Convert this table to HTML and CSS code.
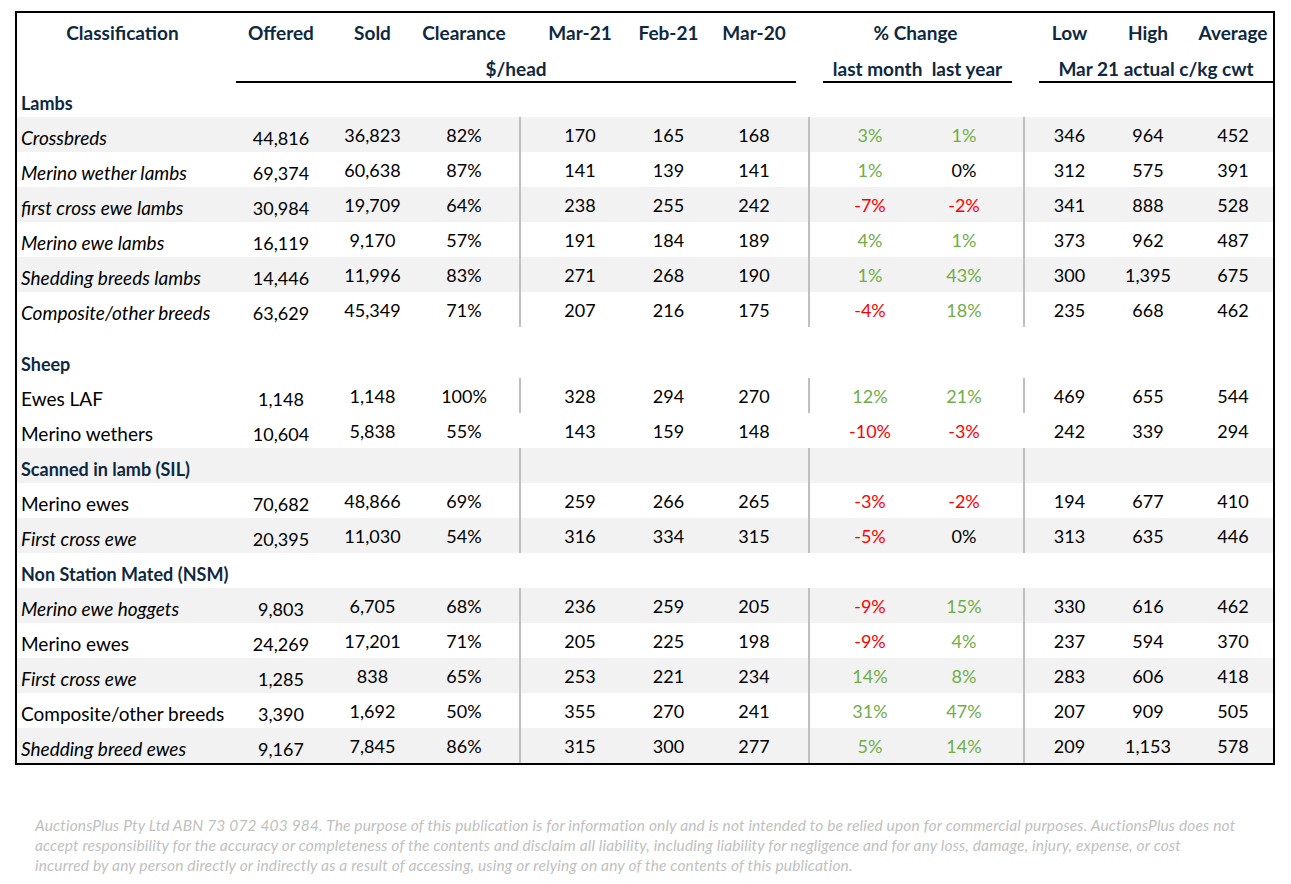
FILE: index.html
```html
<!DOCTYPE html>
<html>
<head>
<meta charset="utf-8">
<title>Sheep and lamb sales summary</title>
<link rel="stylesheet" href="styles.css">
</head>
<body>
<div class="page">
<table class="sheet">
<colgroup>
<col class="w1"><col class="w2"><col class="w3"><col class="w4"><col class="w5"><col class="w6">
<col class="w7"><col class="w8"><col class="w9"><col class="w10"><col class="w11"><col class="w12">
</colgroup>
<thead>
<tr class="hA">
<th class="h-class">Classification</th><th>Offered</th><th>Sold</th><th>Clearance</th><th>Mar-21</th><th>Feb-21</th><th>Mar-20</th><th colspan="2" class="h-chg">% Change</th><th>Low</th><th>High</th><th>Average</th>
</tr>
<tr class="hB">
<th></th>
<th colspan="6"><div class="ul ul-head">$/head</div></th>
<th colspan="2"><div class="ul ul-chg">last month&nbsp; last year</div></th>
<th colspan="3"><div class="ul ul-kg">Mar 21 actual c/kg cwt</div></th>
</tr>
</thead>
<tbody>
<tr class="sec first"><td colspan="12">Lambs</td></tr>
<tr class="band sep"><td class="it">Crossbreds</td><td>44,816</td><td>36,823</td><td>82%</td><td>170</td><td>165</td><td>168</td><td class="up">3%</td><td class="up">1%</td><td>346</td><td>964</td><td>452</td></tr>
<tr class="sep"><td class="it">Merino wether lambs</td><td>69,374</td><td>60,638</td><td>87%</td><td>141</td><td>139</td><td>141</td><td class="up">1%</td><td>0%</td><td>312</td><td>575</td><td>391</td></tr>
<tr class="band sep"><td class="it">first cross ewe lambs</td><td>30,984</td><td>19,709</td><td>64%</td><td>238</td><td>255</td><td>242</td><td class="dn">-7%</td><td class="dn">-2%</td><td>341</td><td>888</td><td>528</td></tr>
<tr class="sep"><td class="it">Merino ewe lambs</td><td>16,119</td><td>9,170</td><td>57%</td><td>191</td><td>184</td><td>189</td><td class="up">4%</td><td class="up">1%</td><td>373</td><td>962</td><td>487</td></tr>
<tr class="band sep"><td class="it">Shedding breeds lambs</td><td>14,446</td><td>11,996</td><td>83%</td><td>271</td><td>268</td><td>190</td><td class="up">1%</td><td class="up">43%</td><td>300</td><td>1,395</td><td>675</td></tr>
<tr class="sep"><td class="it">Composite/other breeds</td><td>63,629</td><td>45,349</td><td>71%</td><td>207</td><td>216</td><td>175</td><td class="dn">-4%</td><td class="up">18%</td><td>235</td><td>668</td><td>462</td></tr>
<tr class="spacer"><td colspan="12"></td></tr>
<tr class="sec"><td colspan="12">Sheep</td></tr>
<tr class="sep"><td>Ewes LAF</td><td>1,148</td><td>1,148</td><td>100%</td><td>328</td><td>294</td><td>270</td><td class="up">12%</td><td class="up">21%</td><td>469</td><td>655</td><td>544</td></tr>
<tr><td>Merino wethers</td><td>10,604</td><td>5,838</td><td>55%</td><td>143</td><td>159</td><td>148</td><td class="dn">-10%</td><td class="dn">-3%</td><td>242</td><td>339</td><td>294</td></tr>
<tr class="sec band sep"><td>Scanned in lamb (SIL)</td><td></td><td></td><td></td><td></td><td></td><td></td><td></td><td></td><td></td><td></td><td></td></tr>
<tr class="sep"><td>Merino ewes</td><td>70,682</td><td>48,866</td><td>69%</td><td>259</td><td>266</td><td>265</td><td class="dn">-3%</td><td class="dn">-2%</td><td>194</td><td>677</td><td>410</td></tr>
<tr class="band sep"><td class="it">First cross ewe</td><td>20,395</td><td>11,030</td><td>54%</td><td>316</td><td>334</td><td>315</td><td class="dn">-5%</td><td>0%</td><td>313</td><td>635</td><td>446</td></tr>
<tr class="sec"><td colspan="12">Non Station Mated (NSM)</td></tr>
<tr class="band sep"><td class="it">Merino ewe hoggets</td><td>9,803</td><td>6,705</td><td>68%</td><td>236</td><td>259</td><td>205</td><td class="dn">-9%</td><td class="up">15%</td><td>330</td><td>616</td><td>462</td></tr>
<tr class="sep"><td>Merino ewes</td><td>24,269</td><td>17,201</td><td>71%</td><td>205</td><td>225</td><td>198</td><td class="dn">-9%</td><td class="up">4%</td><td>237</td><td>594</td><td>370</td></tr>
<tr class="band sep"><td class="it">First cross ewe</td><td>1,285</td><td>838</td><td>65%</td><td>253</td><td>221</td><td>234</td><td class="up">14%</td><td class="up">8%</td><td>283</td><td>606</td><td>418</td></tr>
<tr class="sep"><td>Composite/other breeds</td><td>3,390</td><td>1,692</td><td>50%</td><td>355</td><td>270</td><td>241</td><td class="up">31%</td><td class="up">47%</td><td>207</td><td>909</td><td>505</td></tr>
<tr class="band sep"><td class="it">Shedding breed ewes</td><td>9,167</td><td>7,845</td><td>86%</td><td>315</td><td>300</td><td>277</td><td class="up">5%</td><td class="up">14%</td><td>209</td><td>1,153</td><td>578</td></tr>
</tbody>
</table>
<p class="note">AuctionsPlus Pty Ltd ABN 73 072 403 984. The purpose of this publication is for information only and is not intended to be relied upon for commercial purposes. AuctionsPlus does not<br>accept responsibility for the accuracy or completeness of the contents and disclaim all liability, including liability for negligence and for any loss, damage, injury, expense, or cost<br>incurred by any person directly or indirectly as a result of accessing, using or relying on any of the contents of this publication.</p>
</div>
</body>
</html>
```

FILE: styles.css
```css
* { box-sizing: border-box; }

body {
  margin: 0;
  background: #ffffff;
  font-family: "Lato", "Carlito", "Liberation Sans", sans-serif;
  color: #000000;
}

.page {
  padding: 11px 0 0 15px;
}

.sheet {
  width: 1260px;
  table-layout: fixed;
  border-collapse: separate;
  border-spacing: 0;
  border: 2px solid #000000;
  font-size: 18px;
  line-height: 22px;
}

.w1 { width: 219px; }
.w2 { width: 90px; }
.w3 { width: 93px; }
.w4 { width: 100px; }
.w5 { width: 106px; }
.w6 { width: 87px; }
.w7 { width: 96px; }
.w8 { width: 109px; }
.w9 { width: 106px; }
.w10 { width: 93px; }
.w11 { width: 64px; }
.w12 { width: 93px; }

th, td {
  padding: 0;
  white-space: nowrap;
  text-align: center;
  vertical-align: middle;
}

/* header */
th {
  font-weight: 700;
  font-size: 19px;
  color: #0e2841;
}

.hA th {
  height: 38px;
  padding-top: 2px;
}

.hA .h-class {
  padding-right: 8px;
}

.hA th:nth-child(4) { padding-right: 10px; }
.hA th:nth-child(5) { padding-left: 16px; }
.hA th:nth-child(7) { padding-right: 12px; }
.hA th:nth-child(11) { padding-left: 13px; }

.hB th {
  height: 32px;
  vertical-align: bottom;
}

.ul {
  border-bottom: 2px solid #000000;
  padding-bottom: 1px;
}

.ul-head { margin-right: 12px; }
.ul-chg { margin: 0 11px 0 15px; }
.ul-kg { margin-left: 16px; }

/* body rows */
tbody td {
  height: 35px;
}

tbody td:nth-child(1) {
  text-align: left;
  padding-left: 4px;
  vertical-align: bottom;
  padding-bottom: 3px;
  font-size: 19px;
}

tbody td:nth-child(2) {
  vertical-align: bottom;
  padding-bottom: 3px;
}

tbody td:nth-child(4) { padding-right: 10px; }
tbody td:nth-child(5) { padding-left: 16px; }
tbody td:nth-child(7) { padding-right: 12px; }
tbody td:nth-child(8) { padding-left: 15px; }
tbody td:nth-child(9) { padding-right: 12px; }
tbody td:nth-child(12) { padding-left: 13px; }

.band td {
  background: #f2f2f2;
}

.sep td:nth-child(5),
.sep td:nth-child(8),
.sep td:nth-child(10) {
  box-shadow: inset 2px 0 0 #bfbfbf;
}

.sec td:first-child {
  font-weight: 700;
  font-size: 18px;
  color: #0e2841;
}

.sec.first td {
  height: 34px;
}

.spacer td {
  height: 16px;
}

.it {
  font-style: italic;
}

.up { color: #70ad47; }
.dn { color: #ff0000; }

.note {
  margin: 50px 0 0 20px;
  font-style: italic;
  font-size: 15.5px;
  letter-spacing: 0.15px;
  line-height: 20px;
  color: #bfbfbf;
}
```
